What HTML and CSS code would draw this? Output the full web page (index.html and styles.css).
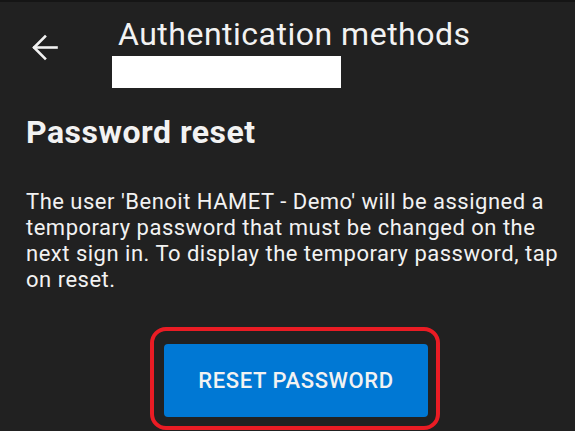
FILE: index.html
```html
<!DOCTYPE html>
<html lang="en">
<head>
    <meta charset="UTF-8">
    <meta name="viewport" content="width=device-width, initial-scale=1.0">
    <title>Authentication methods</title>
    <link rel="stylesheet" href="styles.css">
</head>
<body>
    <div class="topbar"></div>
    <header class="header">
        <button class="back" aria-label="Back">
            <svg width="26" height="27" viewBox="0 0 26 27" fill="none" stroke="#f2f2f2" stroke-width="2.6" stroke-linecap="square">
                <path d="M2.5 13.5H24.5"/>
                <path d="M13 2.5L2 13.5L13 24.5"/>
            </svg>
        </button>
        <div class="titles">
            <div class="title">Authentication methods</div>
            <div class="subtitle"></div>
        </div>
    </header>

    <main class="content">
        <h1>Password reset</h1>
        <p class="desc">The user 'Benoit HAMET - Demo' will be assigned a temporary password that must be changed on the next sign in. To display the temporary password, tap on reset.</p>

        <div class="highlight">
            <button class="reset">RESET PASSWORD</button>
        </div>
    </main>
</body>
</html>
```

FILE: styles.css
```css
body {
    margin: 0;
    background: #212121;
    color: #f2f2f2;
    font-family: Roboto, "Noto Sans", sans-serif;
    height: 431px;
    overflow: hidden;
}

.topbar {
    height: 2px;
    background: #151515;
}

.header {
    display: flex;
    align-items: flex-start;
}

.back {
    background: none;
    border: none;
    padding: 0;
    margin: 32px 0 0 32px;
    width: 26px;
    height: 27px;
    display: block;
}

.back svg {
    display: block;
}

.titles {
    margin-left: 54px;
    padding-top: 14px;
}

.title {
    font-size: 32px;
    line-height: 36px;
    letter-spacing: 0.5px;
    padding-left: 6px;
    color: #f2f2f2;
}

.subtitle {
    margin-top: 4px;
    width: 229px;
    height: 32px;
    background: #ffffff;
}

.content {
    padding: 0 10px 0 26px;
}

h1 {
    margin: 25px 0 0;
    font-size: 32px;
    line-height: 38px;
    font-weight: 700;
    letter-spacing: 0.5px;
}

.desc {
    margin: 38px 0 0;
    font-size: 22px;
    line-height: 26px;
    letter-spacing: 0.5px;
}

.highlight {
    margin: 34px 0 0 124px;
    width: 264px;
    padding: 13px 8px 9px 10px;
    border: 4px solid #ea1c24;
    border-radius: 16px;
}

.reset {
    display: block;
    width: 264px;
    height: 73px;
    background: #0078d4;
    color: #f2f2f2;
    border: none;
    border-radius: 4px;
    font-family: Roboto, sans-serif;
    font-size: 22px;
    font-weight: 500;
    letter-spacing: 0.6px;
}
```
